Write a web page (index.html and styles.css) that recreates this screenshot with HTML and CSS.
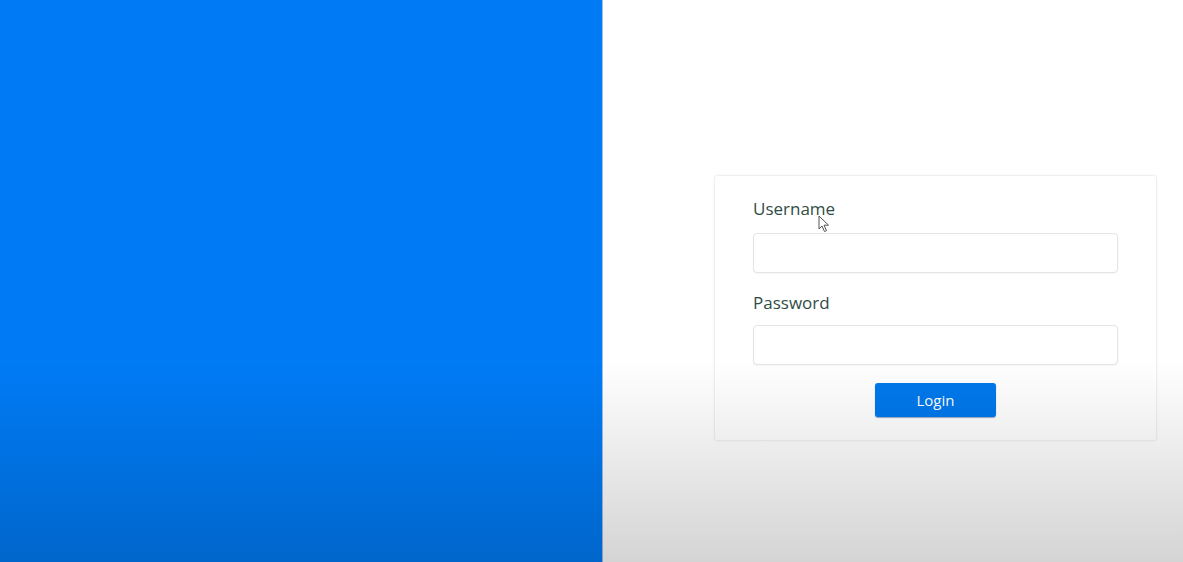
FILE: index.html
```html
<!DOCTYPE html>
<html lang="en">
<head>
<meta charset="utf-8">
<title>Login</title>
<link rel="stylesheet" href="styles.css">
</head>
<body>
<div class="page">
  <div class="side"></div>
  <div class="main">
    <form class="card">
      <label class="label" for="u">Username</label>
      <input class="field" id="u" type="text">
      <label class="label pw" for="p">Password</label>
      <input class="field" id="p" type="password">
      <div class="actions"><button class="btn" type="button">Login</button></div>
    </form>
  </div>
</div>
<svg class="cursor" width="12" height="18" viewBox="0 0 12 18"><path d="M1 1 L1 14 L4 11 L6.5 16.5 L8.5 15.6 L6 10.2 L10.5 10.2 Z" fill="#fff" stroke="#555" stroke-width="1"/></svg>
<div class="shade"></div>
</body>
</html>
```
FILE: styles.css
```css
html, body { margin: 0; height: 100%; }
body { font-family: "Open Sans", "Liberation Sans", sans-serif; background: #fff; overflow: hidden; }
.page { display: flex; height: 562px; }
.side { width: 602px; background: #007bf5; border-right: 1px solid #9fbfe6; }
.main { flex: 1; background: #fff; padding: 175px 26px 0 111px; }
.card {
  display: flex; flex-direction: column;
  border: 1px solid #f0f0f0; border-radius: 3px;
  padding: 22px 38px 23px 38px;
  box-shadow: 0 0 3px rgba(0,0,0,0.05);
}
.label { font-size: 17px; line-height: 22px; color: #2f4d45; margin-bottom: 13px; }
.label.pw { margin-top: 19px; margin-bottom: 11px; }
.field {
  height: 40px; box-sizing: border-box; border: 1px solid #e4e4e4; border-radius: 4px;
  background: #fff; box-shadow: 0 1px 2px rgba(0,0,0,0.04); outline: none;
}
.actions { display: flex; justify-content: center; margin-top: 18px; }
.btn {
  width: 121px; height: 34px; border: 0; border-radius: 3px;
  background: #0078ec; color: #fff; font-family: inherit; font-size: 15px;
  box-shadow: 0 1px 1px rgba(0,40,100,0.4);
}
.cursor { position: absolute; left: 818px; top: 215px; }
.shade {
  position: absolute; inset: 0; pointer-events: none;
  background: linear-gradient(to bottom, rgba(0,0,0,0) 0%, rgba(0,0,0,0) 64%, rgba(0,0,0,0.05) 75%, rgba(0,0,0,0.17) 100%);
}
```
